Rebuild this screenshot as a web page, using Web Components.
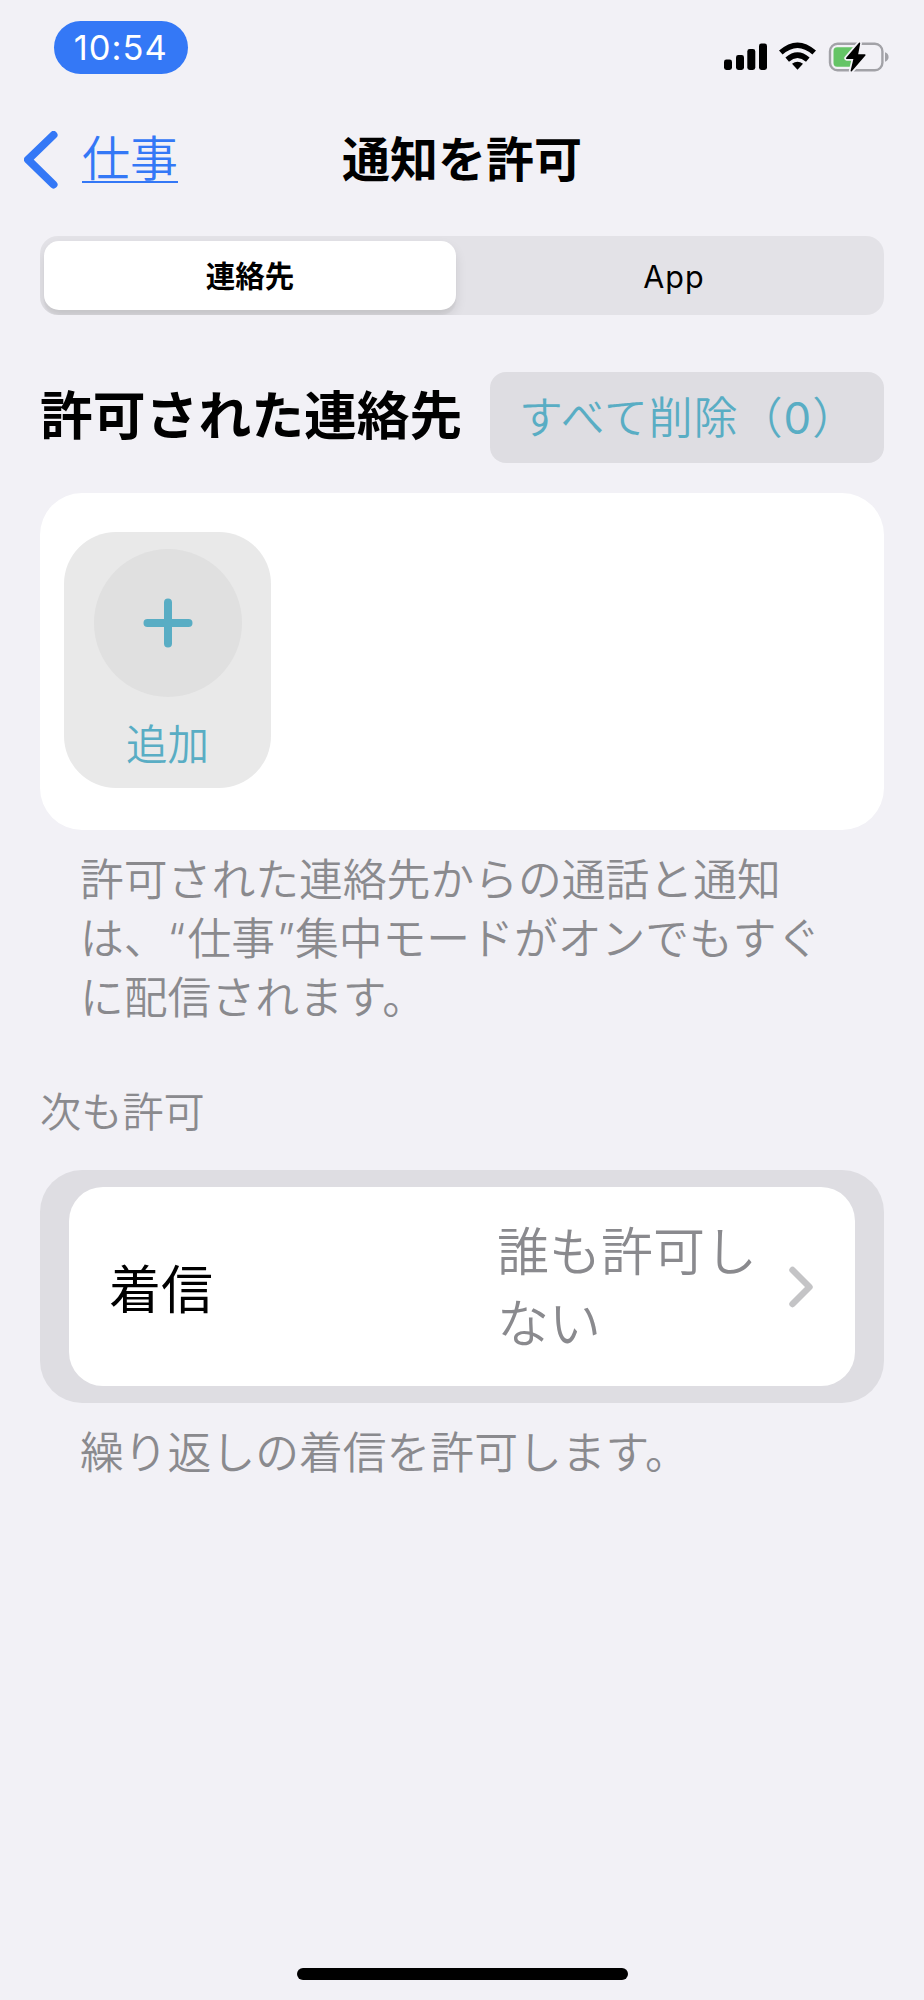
<!DOCTYPE html>
<html lang="ja">
<head>
<meta charset="utf-8">
<title>通知を許可</title>
<style>
  html, body { margin: 0; padding: 0; }
  body {
    width: 924px; height: 2000px; overflow: hidden; background: #f2f1f6; color: #000;
    font-family: Inter, "Noto Sans CJK JP", sans-serif;
    --blue: #3478f6; --teal: #59adc4; --gray: #8a8a8e; --fill: #dedde2;
  }
  .mode { margin: 0 2px; }
  .count { font-weight: 400; }
</style>
</head>
<body>
<focus-screen>
  <status-bar slot="status" time="10:54"></status-bar>
  <nav-bar slot="nav" back="仕事">通知を許可</nav-bar>
  <segmented-control><span slot="on">連絡先</span><span slot="off">App</span></segmented-control>
  <section-head>許可された連絡先<span slot="action">すべて削除（<span class="count">0</span>）</span></section-head>
  <contact-card><add-tile>追加</add-tile></contact-card>
  <foot-note>許可された連絡先からの通話と通知<br>は、“<span class="mode">仕事</span>”集中モードがオンでもすぐ<br>に配信されます。</foot-note>
  <group-label>次も許可</group-label>
  <setting-row>着信<span slot="value">誰も許可し<br>ない</span></setting-row>
  <foot-note>繰り返しの着信を許可します。</foot-note>
  <home-indicator slot="home"></home-indicator>
</focus-screen>
<script>
const define = (name, html) => customElements.define(name, class extends HTMLElement {
  constructor() {
    super();
    this.attachShadow({ mode: 'open' }).innerHTML = html;
  }
  connectedCallback() {
    for (const el of this.shadowRoot.querySelectorAll('[data-attr]'))
      el.textContent = this.getAttribute(el.dataset.attr);
  }
});

define('focus-screen', `
<style>
  :host { display: flex; flex-direction: column; height: 2000px; box-sizing: border-box; }
  main { flex: 1; display: flex; flex-direction: column; padding: 0 40px; }
</style>
<slot name="status"></slot><slot name="nav"></slot>
<main><slot></slot></main>
<slot name="home"></slot>`);

define('status-bar', `
<style>
  :host { display: flex; justify-content: space-between; height: 100px; box-sizing: border-box; padding: 21px 34px 0 53.5px; }
  .time { width: 134.5px; height: 53px; border-radius: 27px; background: var(--blue); color: #fff;
    font-size: 34.5px; line-height: 54px; text-align: center; letter-spacing: 1px; font-weight: 400; }
  svg { display: block; margin-top: 20px; }
</style>
<div class="time" data-attr="time"></div>
<svg width="166" height="32" viewBox="0 0 166 32">
  <g fill="#000">
    <rect x="0" y="18.6" width="8" height="10.4" rx="2.4"/>
    <rect x="12" y="14" width="8" height="15" rx="2.4"/>
    <rect x="23.3" y="8" width="8" height="21" rx="2.4"/>
    <rect x="35" y="2.5" width="8" height="26.5" rx="2.4"/>
  </g>
  <g fill="none" stroke="#000" stroke-width="5.4">
    <path d="M56.8 11.6 Q73.5 -3.2 90.2 11.6"/>
    <path d="M63.2 18.6 Q73.5 9.6 83.8 18.6"/>
  </g>
  <path d="M68 22.8 Q73.5 18.6 79 22.8 L73.5 28.8 Z"/>
  <rect x="106" y="2.8" width="52.4" height="26.4" rx="7.5" fill="none" stroke="#a2a2a7" stroke-width="2.4"/>
  <path d="M161 11.3 C165.8 12.6 165.8 19.4 161 20.7 Z" fill="#a2a2a7"/>
  <rect x="109.5" y="6.3" width="24" height="19.4" rx="3.6" fill="#65c466"/>
  <path d="M135.4 2.4 L122.8 17.2 H130.4 L127.4 29.6 L140.8 14 H133.2 Z" fill="#000" stroke="#f2f1f6" stroke-width="5" stroke-linejoin="round"/>
  <path d="M135.4 2.4 L122.8 17.2 H130.4 L127.4 29.6 L140.8 14 H133.2 Z" fill="#000" stroke="#000" stroke-width="1.6" stroke-linejoin="round"/>
</svg>`);

define('nav-bar', `
<style>
  :host { display: grid; grid-template-columns: 1fr auto 1fr; align-items: center; height: 120px; padding: 0 24px; }
  .back { display: flex; align-items: center; gap: 24px; color: var(--blue); font-size: 48px; line-height: 60px; font-weight: 350; }
  .back span { border-bottom: 2.5px solid var(--blue); height: 50px; line-height: 56px; margin-top: -7px; }
  svg { display: block; }
  h1 { margin: 0; font-size: 48px; line-height: 60px; font-weight: 700; }
</style>
<div class="back">
  <svg width="34" height="58" viewBox="0 0 34 58"><path d="M29.5 4 L4 28.7 L29.5 53.5" fill="none" stroke="#3478f6" stroke-width="8" stroke-linecap="round" stroke-linejoin="round"/></svg>
  <span data-attr="back"></span>
</div>
<h1><slot></slot></h1><i></i>`);

define('segmented-control', `
<style>
  :host { display: flex; margin-top: 16px; height: 79px; box-sizing: border-box; padding: 5px 4px; border-radius: 18px;
    background: #e3e2e7; font-size: 29.5px; overflow: hidden; }
  div { flex: 1; text-align: center; line-height: 71px; }
  .on { flex: 0 0 412px; height: 69px; background: #fff; border-radius: 15px; font-weight: 700; box-shadow: 0 6px 12px rgba(0,0,0,.1), 0 5px 2px rgba(0,0,0,.04); }
  .off { font-weight: 400; font-size: 30.5px; letter-spacing: 1px; padding-left: 12px; }
</style>
<div class="on"><slot name="on"></slot></div><div class="off"><slot name="off"></slot></div>`);

define('section-head', `
<style>
  :host { display: flex; justify-content: space-between; align-items: center; margin-top: 57px; height: 91px; }
  h2 { margin: -4px 0 0; font-size: 52.8px; line-height: 86px; font-weight: 700; white-space: nowrap; }
  .action { width: 394px; height: 91px; box-sizing: border-box; padding-left: 29px; border-radius: 16px; background: var(--fill);
    color: var(--teal); font-size: 43.8px; letter-spacing: 1.1px; font-weight: 350; line-height: 93px; white-space: nowrap; }
</style>
<h2><slot></slot></h2><div class="action"><slot name="action"></slot></div>`);

define('contact-card', `
<style>
  :host { display: flex; margin-top: 30px; height: 337px; box-sizing: border-box; padding: 39px 24px; border-radius: 42px; background: #fff; }
</style><slot></slot>`);

define('add-tile', `
<style>
  :host { display: flex; flex-direction: column; align-items: center; width: 207px; height: 256px; box-sizing: border-box;
    padding-top: 17px; border-radius: 52px; background: #e9e9e9; color: var(--teal); font-size: 41.5px; font-weight: 350; }
  .disc { display: grid; place-items: center; width: 148px; height: 148px; border-radius: 50%; background: #e0e0e0; }
  span { margin-top: 18px; line-height: 60px; }
</style>
<div class="disc"><svg width="50" height="50" viewBox="0 0 50 50"><path d="M25 4.5V45.5M4.5 25H45.5" stroke="#59adc4" stroke-width="8" stroke-linecap="round"/></svg></div>
<span><slot></slot></span>`);

define('foot-note', `
<style>:host { display: block; margin-top: 21px; padding-left: 40px; color: var(--gray); font-size: 43.8px; line-height: 59px; font-weight: 350; white-space: nowrap; }</style><slot></slot>`);

define('group-label', `
<style>:host { display: block; margin-top: 54px; color: var(--gray); font-size: 41.2px; line-height: 60px; font-weight: 350; }</style><slot></slot>`);

define('setting-row', `
<style>
  :host { display: block; margin-top: 28px; height: 233px; box-sizing: border-box; padding: 17px 29px; border-radius: 42px; background: var(--fill); }
  .row { display: flex; align-items: center; height: 199px; box-sizing: border-box; padding: 0 41px 0 40px; border-radius: 34px; background: #fff; font-size: 52px; font-weight: 350; }
  .label { flex: 1; font-weight: 400; }
  .value { width: 292px; padding-top: 5px; color: var(--gray); line-height: 72px; white-space: nowrap; }
  svg { display: block; }
</style>
<div class="row"><div class="label"><slot></slot></div><div class="value"><slot name="value"></slot></div>
<svg width="25" height="42" viewBox="0 0 25 42"><path d="M3.5 4 L20.5 21 L3.5 38" fill="none" stroke="#c4c4c6" stroke-width="6.4" stroke-linecap="round" stroke-linejoin="round"/></svg></div>`);

define('home-indicator', `
<style>
  :host { display: flex; justify-content: center; padding-bottom: 20px; }
  div { width: 331px; height: 12px; border-radius: 6px; background: #000; }
</style><div></div>`);
</script>
</body>
</html>
